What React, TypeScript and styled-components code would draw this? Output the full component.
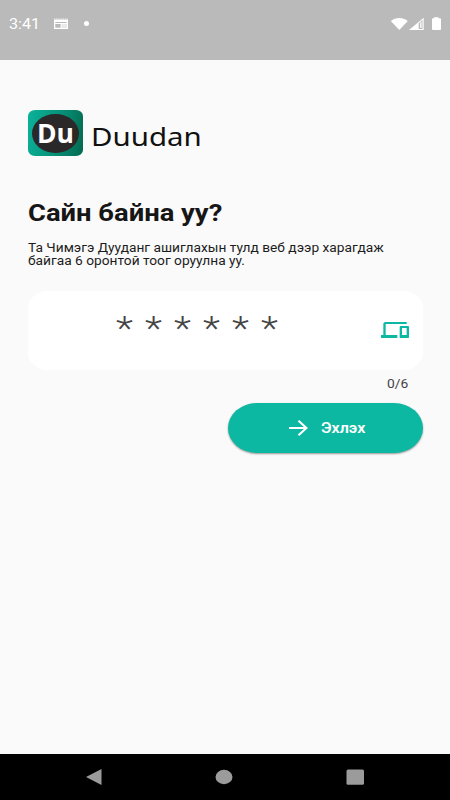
import React from "react";
import styled, { createGlobalStyle } from "styled-components";

const GlobalStyle = createGlobalStyle`
  * { box-sizing: border-box; }
  body { margin: 0; background: #fafafa; font-family: Roboto, "Noto Sans", sans-serif; }
`;

const Screen = styled.div`
  display: flex;
  flex-direction: column;
  width: 450px;
  height: 800px;
  overflow: hidden;
  background: #fafafa;
`;

const StatusBar = styled.header`
  display: flex;
  align-items: flex-start;
  height: 60px;
  padding: 15px 8px 0 9px;
  background: #bababa;
  color: #fff;
`;

/* Text drawn wider than its natural proportions, anchored at its left edge. */
const Wide = styled.span<{ $scale: number }>`
  display: block;
  width: max-content;
  white-space: pre;
  transform: scaleX(${(p) => p.$scale});
  transform-origin: 0 50%;
`;

const Clock = styled.div`
  width: 44px;
  font-size: 14px;
  line-height: 18px;
`;

const NewsIcon = styled.svg`
  display: block;
  width: 16px;
  height: 12px;
  margin-top: 3px;
`;

const Dot = styled.span`
  width: 5px;
  height: 5px;
  margin: 6px 0 0 15px;
  border-radius: 50%;
  background: #fff;
`;

const Signals = styled.svg`
  display: block;
  width: 52px;
  height: 14px;
  margin: 2px 0 0 auto;
`;

const Main = styled.main`
  flex: 1;
  display: flex;
  flex-direction: column;
  padding: 50px 27.5px 0;
`;

const Brand = styled.div`
  display: flex;
  height: 47px;
`;

const LogoTile = styled.div`
  display: grid;
  place-items: center;
  width: 55px;
  height: 46px;
  border-radius: 7px / 6px;
  background: linear-gradient(100deg, #0bb39a 0%, #079078 55%, #04684f 100%);
`;

const LogoDisc = styled.div`
  width: 47px;
  height: 39px;
  padding-left: 5.5px;
  border-radius: 50%;
  background: #2b2829;
  color: #fff;
  font: 700 27px/37px "Open Sans", "Noto Sans", sans-serif;
`;

const BrandName = styled.div`
  padding-left: 8px;
  color: #111;
  font: 400 25.5px/52px "Noto Sans", sans-serif;
`;

const Title = styled.h1`
  height: 30px;
  margin: 41px 0 0;
  color: #161616;
  font-size: 23.5px;
  font-weight: 700;
  line-height: 31px;
`;

const Lead = styled.p`
  height: 26px;
  margin: 14px 0 0;
  color: #1c1c1c;
  font-size: 12px;
  line-height: 13px;
`;

const CodeField = styled.div`
  display: flex;
  align-items: center;
  height: 79px;
  margin-top: 22.5px;
  padding: 0 14px 0 88px;
  border-radius: 20px / 17px;
  background: #fff;
`;

const Stars = styled.div`
  flex: 1;
  padding-bottom: 4px;
  color: #444;
  font-size: 34px;
  font-weight: 300;
  letter-spacing: 1.03px;
  line-height: 50px;
`;

const DevicesIcon = styled.svg`
  display: block;
  width: 28px;
  height: 24px;
`;

const Counter = styled.div`
  align-self: flex-end;
  width: 36px;
  height: 18px;
  margin-top: 5.5px;
  color: #444;
  font-size: 12px;
  line-height: 18px;
`;

const StartButton = styled.button`
  display: flex;
  align-items: center;
  align-self: flex-end;
  width: 195px;
  height: 50px;
  margin-top: 10px;
  padding: 0 0 0 61px;
  border: 0;
  border-radius: 29px / 25px;
  background: #0cb8a1;
  box-shadow: 0 1px 2px rgba(0, 0, 0, 0.4);
  color: #fff;
  font: 600 14px/20px Roboto, sans-serif;
`;

const ArrowIcon = styled.svg`
  display: block;
  width: 19px;
  height: 16px;
  margin-right: 13px;
`;

const NavBar = styled.nav`
  display: flex;
  justify-content: space-between;
  align-items: center;
  height: 46px;
  padding: 0 86.5px 0 85px;
  background: #000;
`;

const NavIcon = styled.svg`
  display: block;
  width: 18px;
  height: 16px;
  fill: #9b9b9b;
`;

export default function App() {
  return (
    <>
      <GlobalStyle />
      <Screen>
        <StatusBar>
          <Clock><Wide $scale={1.15}>3:41</Wide></Clock>
          <NewsIcon viewBox="0 0 16 12">
            <path d="M1 .8H15" stroke="#fff" strokeWidth="1" strokeDasharray="1.2 1" opacity=".7" />
            <path fill="#fff" fillRule="evenodd" d="M1 1.5H15V11H1ZM2.3 4V5H13.6V4ZM2.3 6V9.8H7.6V6ZM8.8 6V9.8H13.6V6Z" />
            <path fill="#fff" opacity=".7" d="M8.8 6H13.6V9.8H8.8Z" />
          </NewsIcon>
          <Dot />
          <Signals viewBox="0 0 52 14">
            <path fill="#fff" d="M.8 4C5.5-.1 13-.1 17.8 4L9.300 13Z" />
            <path fill="#fff" d="M19 13L33.7.8V13Z" />
            <path fill="#bababa" d="M28.700 6.300L32.500 3V12H28.700Z" />
            <path fill="#fff" opacity=".8" d="M30 5.800L31.700 4.500V11H30Z" />
            <path fill="#fff" d="M44 1.300V.3H48.500V1.300H50Q51 1.300 51 2.300V12Q51 13 50 13H43Q42 13 42 12V2.300Q42 1.300 43 1.300Z" />
          </Signals>
        </StatusBar>
        <Main>
          <Brand>
            <LogoTile><LogoDisc><Wide $scale={0.98}>Du</Wide></LogoDisc></LogoTile>
            <BrandName><Wide $scale={1.155}>Duudan</Wide></BrandName>
          </Brand>
          <Title><Wide $scale={1.165}>Сайн байна уу?</Wide></Title>
          <Lead>
            <Wide $scale={1.144}>Та Чимэгэ Дууданг ашиглахын тулд веб дээр харагдаж</Wide>
            <Wide $scale={1.144}>байгаа 6 оронтой тоог оруулна уу.</Wide>
          </Lead>
          <CodeField>
            <Stars><Wide $scale={1.17}>* * * * * *</Wide></Stars>
            <DevicesIcon viewBox="0 0 24 24" preserveAspectRatio="none">
              <path fill="#0cb8a1" d="M4 6h18V4H4c-1.100 0-2 .9-2 2v11H0v3h14v-3H4V6zm19 2h-6c-.55 0-1 .45-1 1v10c0 .55.45 1 1 1h6c.55 0 1-.45 1-1V9c0-.55-.45-1-1-1zm-1 9h-4v-7h4v7z" />
            </DevicesIcon>
          </CodeField>
          <Counter><Wide $scale={1.15}>0/6</Wide></Counter>
          <StartButton>
            <ArrowIcon viewBox="0 0 19 16">
              <path d="M0 8H17M9.500 .8L17.500 8L9.500 15.200" fill="none" stroke="#fff" strokeWidth="2.100" />
            </ArrowIcon>
            <Wide $scale={1.15}>Эхлэх</Wide>
          </StartButton>
        </Main>
        <NavBar>
          <NavIcon viewBox="0 0 18 16"><path d="M1 8L16.500 0V16Z" /></NavIcon>
          <NavIcon viewBox="0 0 18 16"><ellipse cx="9" cy="8" rx="8.500" ry="7.200" /></NavIcon>
          <NavIcon viewBox="0 0 18 16"><rect x=".5" y=".5" width="17.500" height="15.300" rx="1.500" /></NavIcon>
        </NavBar>
      </Screen>
    </>
  );
}
